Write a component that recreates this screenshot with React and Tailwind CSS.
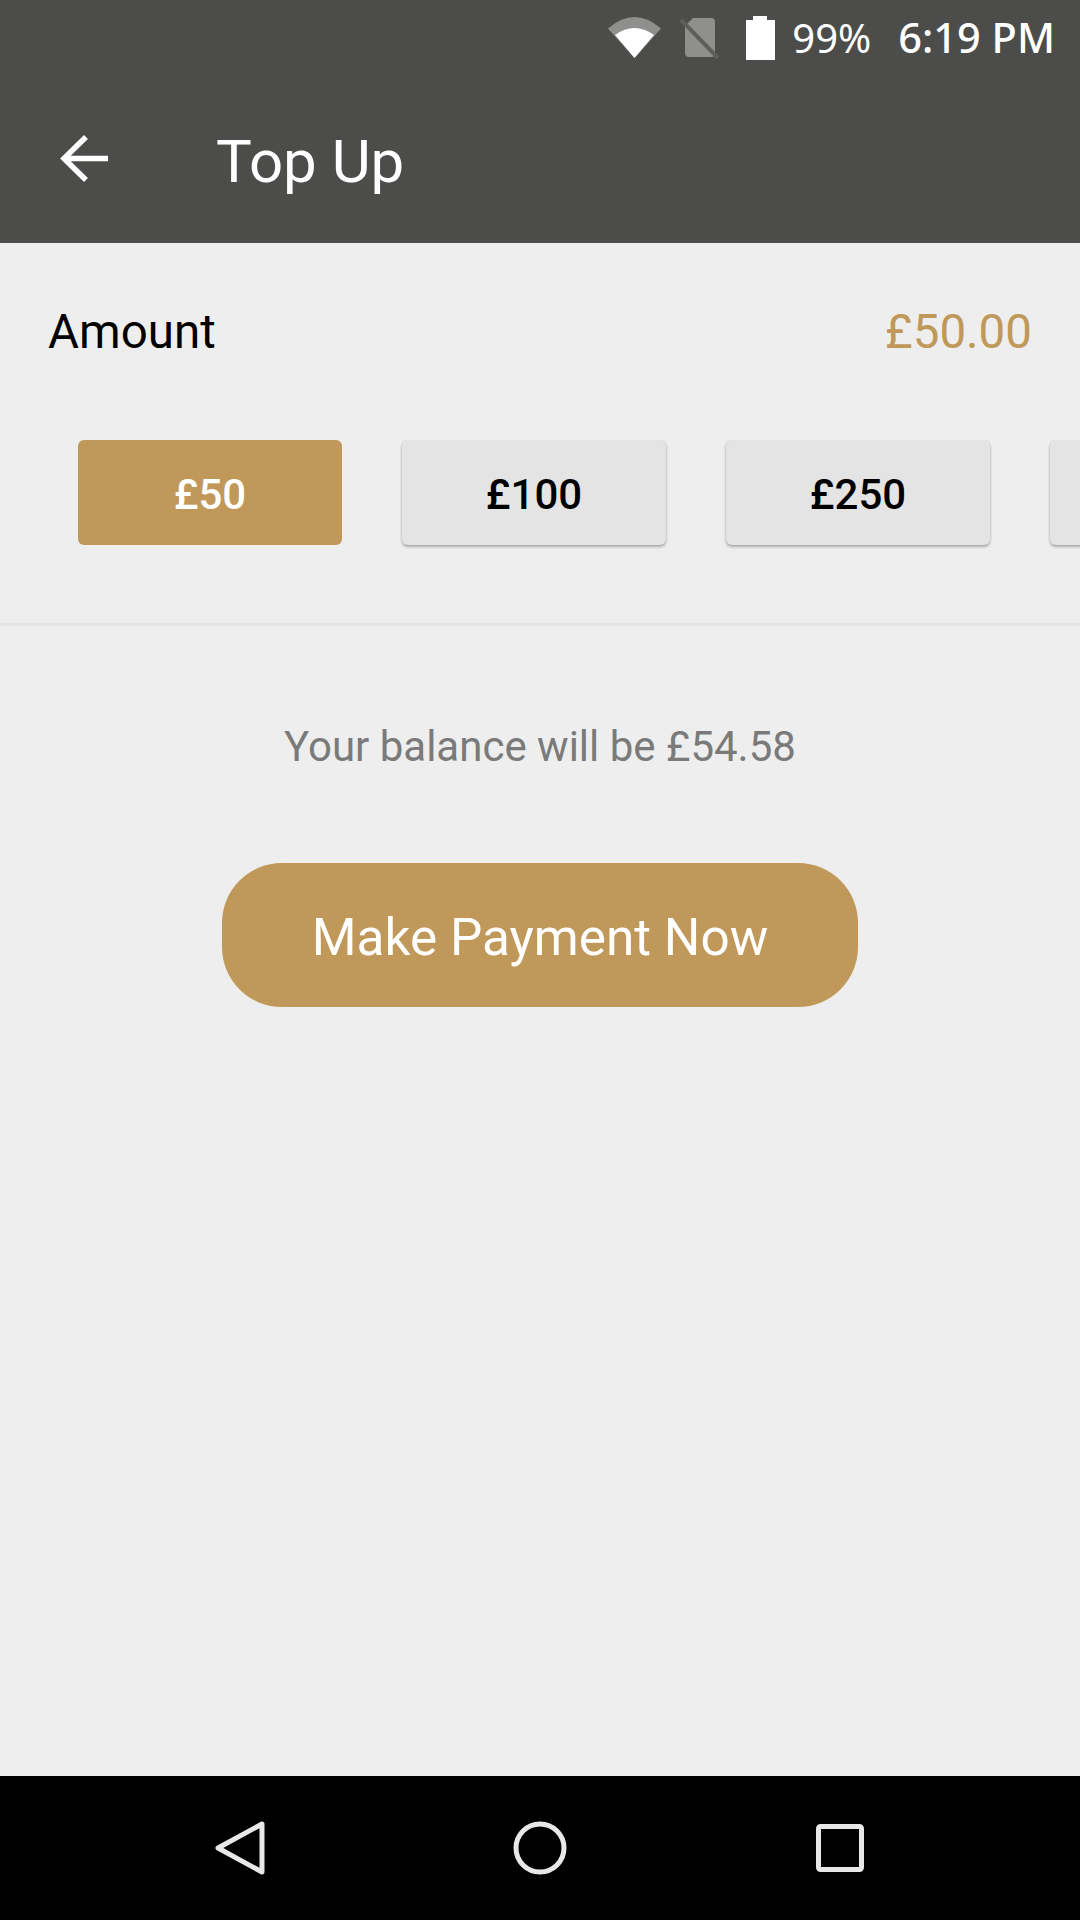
const GOLD = "bg-[#c09859]";

function Wifi() {
  return (
    <svg width="53" height="41" viewBox="0 0 53 41" className="block">
      <path d="M0 11.500 Q26.500 -11.500 53 11.500 L26.500 41 Z" fill="#8f8f8e" />
      <path d="M7 18 Q26.500 4 46 18 L26.500 41 Z" fill="#ffffff" />
    </svg>
  );
}

function NoSim() {
  return (
    <svg width="40" height="41" viewBox="0 0 40 41" className="block">
      <path d="M13 0 H31 Q35 0 35 4 V35 Q35 39 31 39 H9 Q5 39 5 35 V8 Z" fill="#8f8f8e" />
      <path d="M1 2 L38 40" stroke="#5e5e5d" strokeWidth="4" />
    </svg>
  );
}

function Battery() {
  return (
    <svg width="29" height="44" viewBox="0 0 29 44" className="block">
      <path d="M7 0 H21 V4 H29 V44 H0 V4 H7 Z" fill="#ffffff" />
    </svg>
  );
}

function BackArrow() {
  return (
    <svg width="50" height="50" viewBox="0 0 50 50" className="block">
      <path d="M49 24.500 H4 M27 3 L5 24.500 L27 46" fill="none" stroke="#ffffff" strokeWidth="5.500" />
    </svg>
  );
}

function Amount({ label, selected }) {
  return (
    <div
      className={
        selected
          ? "w-[264px] h-[105px] shrink-0 rounded-[6px] bg-[#c09859] flex items-center justify-center pt-[4px] text-white text-[42px] font-medium"
          : "w-[264px] h-[105px] shrink-0 rounded-[6px] bg-[#e4e4e4] shadow-[0_2px_3px_rgba(0,0,0,0.28),0_0_2px_rgba(0,0,0,0.12)] flex items-center justify-center pt-[4px] text-black text-[42px] font-medium"
      }
    >
      {label}
    </div>
  );
}

export default function App() {
  return (
    <div className="w-[1080px] h-[1920px] flex flex-col bg-[#eeeeee] overflow-hidden font-['Roboto',sans-serif]">
      <header className="h-[243px] shrink-0 bg-[#4c4c4a] flex flex-col text-white">
        <div className="h-[75px] flex items-center justify-end pr-[25px] font-['Noto_Sans',sans-serif]">
          <Wifi />
          <div className="ml-[19px] mt-[1px]"><NoSim /></div>
          <div className="ml-[26px]"><Battery /></div>
          <span className="ml-[17px] text-[40px] leading-none">99%</span>
          <span className="ml-[27px] text-[41.5px] leading-none font-medium">6:19 PM</span>
        </div>
        <div className="flex-1 flex items-start pt-[59px] pl-[59px]">
          <BackArrow />
          <span className="ml-[107px] -mt-[8px] text-[60px] leading-[72px]">Top Up</span>
        </div>
      </header>

      <main className="flex-1 flex flex-col">
        <div className="flex justify-between items-center pt-[61px] pb-[1px] pl-[48px] pr-[48px]">
          <span className="text-[47.5px] leading-[56px] text-black">Amount</span>
          <span className="text-[47.5px] leading-[56px] text-[#c09859]">£50.00</span>
        </div>

        <div className="mt-[79px] flex gap-[60px] pl-[78px] overflow-hidden pb-[78px] border-b-[3px] border-[#e4e4e4]">
          <Amount label="£50" selected />
          <Amount label="£100" />
          <Amount label="£250" />
          <Amount />
        </div>

        <p className="mt-[96px] text-center text-[42px] leading-[50px] text-[#7a7a7a]">
          Your balance will be £54.58
        </p>

        <button className={`mt-[91px] self-center w-[636px] h-[144px] rounded-[60px] ${GOLD} text-white text-[51.3px] flex items-center justify-center pt-[6px]`}>
          Make Payment Now
        </button>
      </main>

      <nav className="h-[144px] shrink-0 bg-black flex items-center justify-center gap-[200px]">
        <div className="w-[100px] flex justify-center">
          <svg width="52" height="54" viewBox="0 0 52 54" className="block">
            <path d="M48 3 L4 27 L48 51 Z" fill="none" stroke="#e8e8e8" strokeWidth="5" strokeLinejoin="round" />
          </svg>
        </div>
        <div className="w-[100px] flex justify-center">
          <svg width="54" height="54" viewBox="0 0 54 54" className="block">
            <circle cx="27" cy="27" r="24" fill="none" stroke="#e8e8e8" strokeWidth="5" />
          </svg>
        </div>
        <div className="w-[100px] flex justify-center">
          <svg width="48" height="48" viewBox="0 0 48 48" className="block">
            <rect x="2.500" y="2.500" width="43" height="43" rx="2" fill="none" stroke="#e8e8e8" strokeWidth="5" />
          </svg>
        </div>
      </nav>
    </div>
  );
}
